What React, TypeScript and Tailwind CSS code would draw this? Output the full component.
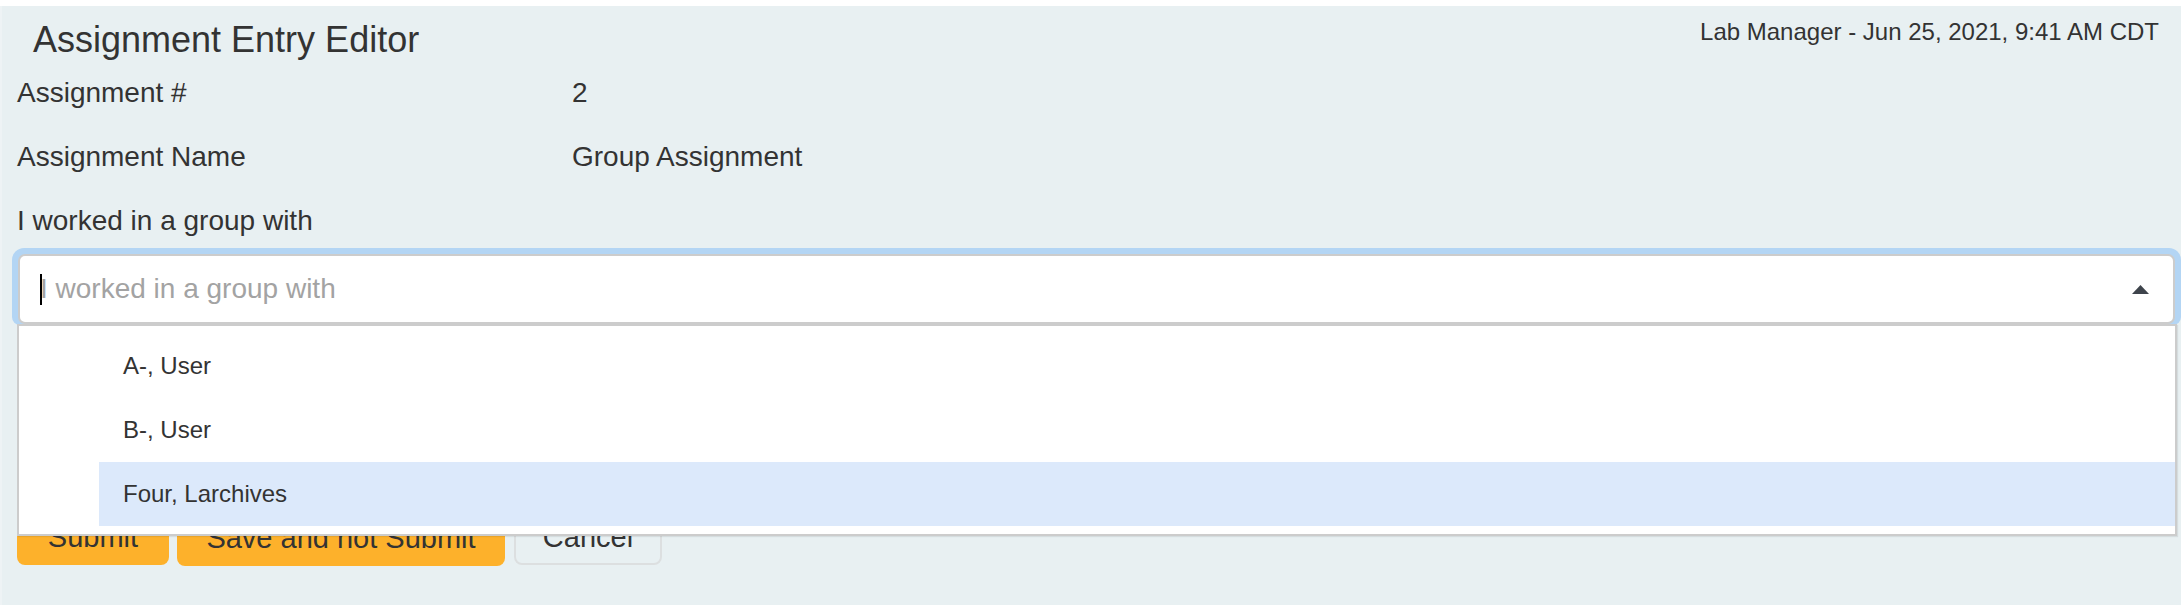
import React from "react";

export default function App() {
  const items = ["A-, User", "B-, User", "Four, Larchives"];
  return (
    <div
      className="w-[2181px] h-[605px] bg-white pt-[6px] overflow-hidden text-[#333333]"
      style={{ fontFamily: '"Liberation Sans", Arial, Helvetica, sans-serif' }}
    >
      <div className="relative h-[599px] bg-[#e8f0f2] border-l-2 border-[#eef3f5]">
        {/* header */}
        <div className="flex items-start justify-between">
          <h1 className="mt-[14px] ml-[31px] text-[36px] leading-[40px] font-normal">
            Assignment Entry Editor
          </h1>
          <div className="mt-[12px] mr-[22px] text-[24px] leading-[28px]">
            Lab Manager - Jun 25, 2021, 9:41 AM CDT
          </div>
        </div>

        {/* rows */}
        <div className="mt-[1px] pl-[15px] text-[28px]">
          <div className="flex h-[64px] leading-[64px]">
            <div className="w-[555px]">Assignment #</div>
            <div>2</div>
          </div>
          <div className="flex h-[64px] leading-[64px]">
            <div className="w-[555px]">Assignment Name</div>
            <div>Group Assignment</div>
          </div>
          <div className="h-[59px] leading-[64px]">I worked in a group with</div>
        </div>

        {/* select control */}
        <div className="relative ml-[10px] rounded-t-[12px] rounded-b-[8px] bg-[#b3d5f4] px-[6px] pt-[6px] pb-[1px]">
          <div className="relative flex h-[70px] items-center rounded-[7px] border-2 border-[#cccccc] bg-white pl-[20px] pr-[24px]">
            <div className="relative text-[28px] text-[#a3a3a3] leading-[32px]">
              <span className="absolute left-0 top-[1px] h-[31px] w-[2px] bg-black" />
              I worked in a group with
            </div>
            <div className="ml-auto flex items-center">
              <svg width="17" height="9" viewBox="0 0 17 9">
                <polygon points="8.5,0 17,9 0,9" fill="#3e444c" />
              </svg>
            </div>
          </div>

          {/* dropdown menu */}
          <div className="absolute left-[5px] right-[4px] top-full -mt-[1px] z-10 border-2 border-[#cccccc] bg-white py-[8px] shadow-[1px_1px_1px_rgba(0,0,0,0.08)]">
            <ul className="ml-[80px]">
              {items.map((it, i) => (
                <li
                  key={it}
                  className={
                    "h-[64px] pl-[24px] text-[24px] leading-[64px] " +
                    (i === 2 ? "bg-[#dce9fb]" : "")
                  }
                >
                  {it}
                </li>
              ))}
            </ul>
          </div>
        </div>

        {/* buttons */}
        <div className="mt-[172px] ml-[15px] flex items-start text-[29px]">
          <button className="h-[68px] w-[152px] rounded-[8px] bg-[#fdb12b] pt-[12px] leading-[32px] text-[#333333]">
            <span className="block">Submit</span>
          </button>
          <button className="ml-[8px] h-[69px] w-[328px] rounded-[8px] bg-[#fdb12b] pt-[12px] leading-[32px] text-[#333333]">
            <span className="block">Save and not Submit</span>
          </button>
          <button className="ml-[9px] h-[68px] w-[148px] rounded-[8px] border-2 border-[#dcdfe0] pt-[12px] leading-[32px] text-[#333333]">
            <span className="block">Cancel</span>
          </button>
        </div>
      </div>
    </div>
  );
}
